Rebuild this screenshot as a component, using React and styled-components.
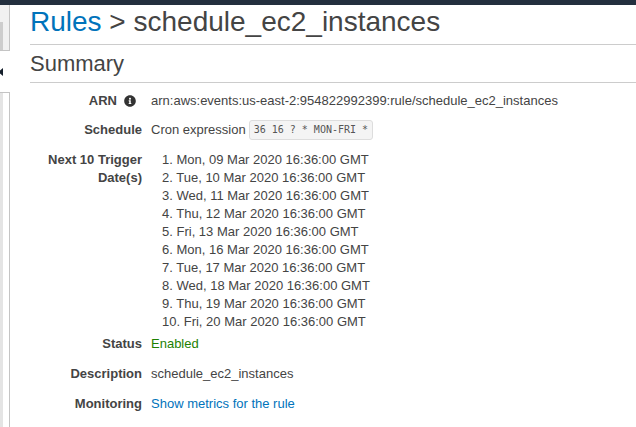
import React from "react";
import styled, { createGlobalStyle } from "styled-components";
import { FaInfoCircle } from "react-icons/fa";

const Global = createGlobalStyle`
  html, body, #root { height: 100%; }
  body {
    margin: 0;
    background: #fff;
    font-family: "Liberation Sans", Arial, sans-serif;
    color: #444;
    overflow: hidden;
  }
`;

const Page = styled.div`
  display: flex;
  flex-direction: column;
  height: 100vh;
`;

const TopBar = styled.div`
  height: 5px;
  flex: none;
  background: #232f3e;
`;

const Body = styled.div`
  flex: 1;
  display: flex;
  min-height: 0;
`;

const Sidebar = styled.aside`
  width: 10px;
  flex: none;
  display: flex;
  flex-direction: column;
`;

const SideTop = styled.div`
  height: 46px;
  box-sizing: border-box;
  background: #f1f1f1;
  border-right: 1px solid #c4c4c4;
  border-bottom: 1px solid #c4c4c4;
  display: flex;
  flex-direction: column;
  justify-content: flex-end;
`;

const SideThumb = styled.div`
  width: 3px;
  height: 28px;
  background: #cdcdcd;
`;

const SideGap = styled.div`
  height: 41px;
  display: flex;
  align-items: center;
  padding-top: 1px;
  box-sizing: border-box;
`;

const SideBottom = styled.div`
  flex: 1;
  box-sizing: border-box;
  border-top: 1px solid #c4c4c4;
  border-right: 1px solid #c4c4c4;
  display: flex;
`;

const SideStrip = styled.div`
  width: 3px;
  background: #e4e4e4;
`;

const Main = styled.main`
  flex: 1;
  margin-left: 20px;
  min-width: 0;
`;

const Title = styled.h1`
  margin: 0;
  padding: 1px 0 6px;
  font-size: 28px;
  line-height: 32px;
  font-weight: normal;
  color: #444;
  white-space: nowrap;
  border-bottom: 1px solid #ccc;
`;

const Crumb = styled.a`
  color: #0073bb;
  text-decoration: none;
`;

const Section = styled.h2`
  margin: 7px 0 0;
  padding-bottom: 6px;
  font-size: 22px;
  line-height: 24px;
  font-weight: normal;
  color: #444;
  border-bottom: 1px solid #ccc;
`;

const Rows = styled.div`
  margin-top: 3px;
  font-size: 13px;
  line-height: 18px;
`;

const Row = styled.div`
  display: grid;
  grid-template-columns: 112px 1fr;
  column-gap: 9px;
  align-items: ${(p) => (p.$center ? "center" : "start")};
  padding: ${(p) => p.$pad || "6px 0"};
`;

const Label = styled.div`
  text-align: right;
  font-weight: bold;
  display: flex;
  justify-content: flex-end;
  align-items: center;
`;

const InfoIcon = styled(FaInfoCircle)`
  width: 12px;
  height: 12px;
  margin: 0 6px 0 7px;
  color: #333;
`;

const Value = styled.div`
  display: flex;
  align-items: center;
  white-space: nowrap;
  color: ${(p) => p.$color || "#444"};
`;

const Code = styled.code`
  margin-left: 3px;
  height: 20px;
  box-sizing: border-box;
  padding: 0 4px;
  display: inline-flex;
  align-items: center;
  font-family: "DejaVu Sans Mono", "Liberation Mono", monospace;
  font-size: 10px;
  color: #555;
  background: #f4f4f4;
  border: 1px solid #ddd;
  border-radius: 3px;
`;

const DateList = styled.div`
  padding-left: 11px;
  white-space: nowrap;
`;

const Link = styled.a`
  color: #0073bb;
  text-decoration: none;
`;

const dates = [
  "Mon, 09 Mar 2020 16:36:00 GMT",
  "Tue, 10 Mar 2020 16:36:00 GMT",
  "Wed, 11 Mar 2020 16:36:00 GMT",
  "Thu, 12 Mar 2020 16:36:00 GMT",
  "Fri, 13 Mar 2020 16:36:00 GMT",
  "Mon, 16 Mar 2020 16:36:00 GMT",
  "Tue, 17 Mar 2020 16:36:00 GMT",
  "Wed, 18 Mar 2020 16:36:00 GMT",
  "Thu, 19 Mar 2020 16:36:00 GMT",
  "Fri, 20 Mar 2020 16:36:00 GMT",
];

export default function App() {
  return (
    <>
      <Global />
      <Page>
        <TopBar />
        <Body>
          <Sidebar>
            <SideTop>
              <SideThumb />
            </SideTop>
            <SideGap>
              <svg width="3" height="8" viewBox="0 0 3 8">
                <polygon points="0,2.5 3,0 3,8 0,5.5" fill="#16202c" />
              </svg>
            </SideGap>
            <SideBottom>
              <SideStrip />
            </SideBottom>
          </Sidebar>
          <Main>
            <Title>
              <Crumb href="#">Rules</Crumb> &gt; schedule_ec2_instances
            </Title>
            <Section>Summary</Section>
            <Rows>
              <Row $pad="6px 0 3px">
                <Label>
                  ARN
                  <InfoIcon />
                </Label>
                <Value>arn:aws:events:us-east-2:954822992399:rule/schedule_ec2_instances</Value>
              </Row>
              <Row $center $pad="7px 0 5px">
                <Label>Schedule</Label>
                <Value>
                  Cron expression
                  <Code>36 16 ? * MON-FRI *</Code>
                </Value>
              </Row>
              <Row $pad="6px 0 0">
                <Label>Next 10 Trigger Date(s)</Label>
                <DateList>
                  {dates.map((d, i) => (
                    <div key={i}>
                      {i + 1}. {d}
                    </div>
                  ))}
                </DateList>
              </Row>
              <Row $pad="4px 0 6px">
                <Label>Status</Label>
                <Value $color="#1d8102">Enabled</Value>
              </Row>
              <Row>
                <Label>Description</Label>
                <Value>schedule_ec2_instances</Value>
              </Row>
              <Row>
                <Label>Monitoring</Label>
                <Value>
                  <Link href="#">Show metrics for the rule</Link>
                </Value>
              </Row>
            </Rows>
          </Main>
        </Body>
      </Page>
    </>
  );
}
